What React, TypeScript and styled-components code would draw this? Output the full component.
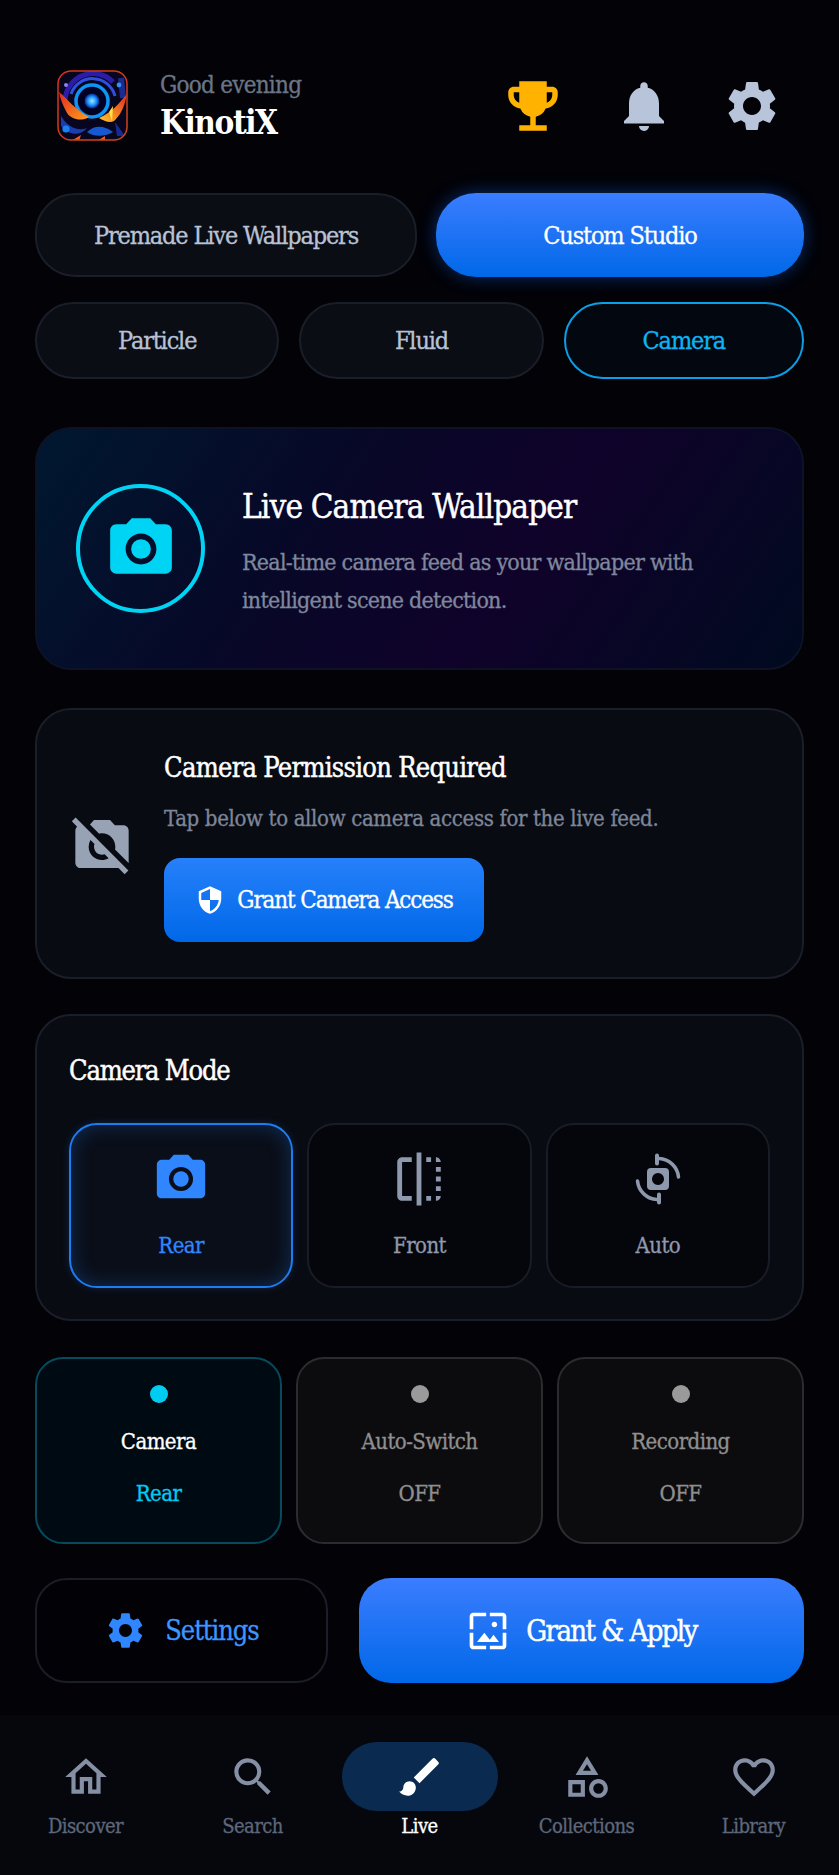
import React from 'react';
import styled, { createGlobalStyle } from 'styled-components';
import {
  MdBrush,
  MdEmojiEvents,
  MdFavoriteBorder,
  MdFlip,
  MdNoPhotography,
  MdNotifications,
  MdOutlineCategory,
  MdOutlineHome,
  MdPhotoCamera,
  MdSearch,
  MdSecurity,
  MdSettings,
  MdWallpaper,
} from 'react-icons/md';

const GlobalStyle = createGlobalStyle`
  html, body {
    margin: 0;
    padding: 0;
    background: #020207;
  }
  * { box-sizing: border-box; }
  body {
    font-family: "DejaVu Serif Condensed", "DejaVu Serif", "Liberation Serif", serif;
    font-stretch: condensed;
    letter-spacing: -0.035em;
    -webkit-text-stroke: 0.3px;
  }
`;

const blueFill = 'linear-gradient(180deg, #3b7dff 0%, #0068e8 100%)';

const Page = styled.div`
  width: 839px;
  height: 1875px;
  overflow: hidden;
  display: flex;
  flex-direction: column;
  background: #020207;
`;

const Main = styled.main`
  flex: 1;
  padding: 70px 35px 0;
  display: flex;
  flex-direction: column;
`;

const Header = styled.header`
  height: 71px;
  display: flex;
  align-items: center;
  padding-left: 22px;
`;

const Brand = styled.div`
  flex: 1;
  display: flex;
  flex-direction: column;
  margin-left: 32px;
`;

const Greeting = styled.div`
  font-size: 24px;
  line-height: 32px;
  letter-spacing: -0.75px;
  color: #6b7585;
`;

const Username = styled.div`
  margin-top: 2px;
  font-size: 33px;
  line-height: 40px;
  font-weight: 700;
  letter-spacing: -1.4px;
  -webkit-text-stroke: 0;
  color: #fff;
`;

const HeaderIcons = styled.div`
  display: flex;
  align-items: center;
  gap: 48px;
  margin-right: 22px;
  font-size: 60px;
  color: #b8c4da;
`;

const TrophyIcon = styled(MdEmojiEvents)`
  font-size: 66px;
  color: #ffb300;
`;

const TabRow = styled.div`
  margin-top: 52px;
  height: 84px;
  display: grid;
  grid-template-columns: 382px 1fr;
  gap: 19px;
`;

const SubTabRow = styled.div`
  margin-top: 25px;
  height: 77px;
  display: grid;
  grid-template-columns: 244fr 244fr 240fr;
  gap: 20px;
`;

const Pill = styled.button<{ $active?: boolean }>`
  font: inherit;
  letter-spacing: -1.15px;
  font-size: 25px;
  border-radius: 40px;
  display: flex;
  align-items: center;
  justify-content: center;
  border: 2px solid ${(p) => (p.$active ? 'transparent' : '#1a1e28')};
  background: ${(p) => (p.$active ? blueFill : '#0a0d14')};
  background-origin: border-box;
  color: ${(p) => (p.$active ? '#fff' : '#b8c2d4')};
  box-shadow: ${(p) => (p.$active ? '0 0 18px rgba(20, 110, 255, 0.4)' : 'none')};
`;

const SubPill = styled(Pill)<{ $selected?: boolean }>`
  border-color: ${(p) => (p.$selected ? '#0a9fe8' : '#1a1e28')};
  background: ${(p) => (p.$selected ? '#03070f' : '#0a0d14')};
  color: ${(p) => (p.$selected ? '#0db4f5' : '#b8c2d4')};
`;

const Hero = styled.section`
  margin-top: 48px;
  height: 243px;
  border-radius: 36px;
  border: 2px solid #0d1226;
  background: linear-gradient(125deg, #001830 0%, #070828 35%, #10022a 62%, #000a20 100%);
  display: flex;
  align-items: center;
  padding: 0 39px;
  gap: 37px;
`;

const HeroBadge = styled.div`
  width: 129px;
  height: 129px;
  flex: none;
  border-radius: 50%;
  border: 4px solid #00d4f5;
  display: flex;
  align-items: center;
  justify-content: center;
  font-size: 74px;
  color: #00d4f5;
`;

const HeroBody = styled.div`
  padding-top: 7px;
`;

const HeroTitle = styled.h1`
  margin: 0 0 15px;
  font-size: 33px;
  line-height: 42px;
  font-weight: 500;
  letter-spacing: -0.85px;
  -webkit-text-stroke: 0.45px;
  color: #fff;
`;

const HeroText = styled.p`
  margin: 0;
  font-size: 23px;
  line-height: 38px;
  letter-spacing: -0.75px;
  color: #7f879c;
`;

const Card = styled.section`
  border-radius: 36px;
  border: 2px solid #1a1e28;
  background: #090b12;
`;

const PermissionCard = styled(Card)`
  margin-top: 38px;
  height: 271px;
  display: flex;
  align-items: center;
  padding: 0 33px;
`;

const PermissionIcon = styled.div`
  width: 94px;
  flex: none;
  font-size: 64px;
  line-height: 0;
  color: #98a2b5;
`;

const PermissionBody = styled.div`
  padding-top: 4px;
`;

const PermissionTitle = styled.h2`
  margin: 0;
  font-size: 27px;
  line-height: 36px;
  font-weight: 500;
  letter-spacing: -0.7px;
  -webkit-text-stroke: 0.45px;
  color: #fff;
`;

const PermissionText = styled.p`
  margin: 15px 0 0;
  font-size: 22px;
  line-height: 36px;
  letter-spacing: -0.35px;
  color: #7d8699;
`;

const GrantButton = styled.button`
  font: inherit;
  letter-spacing: -1.15px;
  margin-top: 21px;
  width: 320px;
  height: 84px;
  border: 0;
  border-radius: 16px;
  background: linear-gradient(180deg, #2680fa 0%, #0068e8 100%);
  color: #fff;
  font-size: 24px;
  display: flex;
  align-items: center;
  justify-content: center;
  gap: 12px;

  svg {
    font-size: 30px;
  }
`;

const ModeCard = styled(Card)`
  margin-top: 35px;
  height: 307px;
  padding: 37px 32px 0;
`;

const SectionTitle = styled.h2`
  margin: 0;
  font-size: 27px;
  line-height: 36px;
  font-weight: 500;
  letter-spacing: -1.2px;
  -webkit-text-stroke: 0.45px;
  color: #fff;
`;

const ModeGrid = styled.div`
  margin-top: 34px;
  display: grid;
  grid-template-columns: repeat(3, 1fr);
  gap: 14px;
`;

const ModeTile = styled.div<{ $active?: boolean }>`
  height: 165px;
  border-radius: 28px;
  border: 2px solid ${(p) => (p.$active ? '#1e7cf0' : '#191c26')};
  background: ${(p) => (p.$active ? '#0a0e18' : '#05060c')};
  box-shadow: ${(p) => (p.$active ? 'inset 0 0 20px rgba(30, 124, 240, 0.3), 0 0 8px rgba(30, 124, 240, 0.2)' : 'none')};
  display: flex;
  flex-direction: column;
  align-items: center;
  padding-top: 25px;
  font-size: 58px;
  color: ${(p) => (p.$active ? '#2f86ff' : '#8f99ad')};

  svg {
    display: block;
  }
`;

const ModeLabel = styled.span`
  margin-top: 23px;
  font-size: 22px;
  line-height: 30px;
`;

const StatusGrid = styled.div`
  margin-top: 36px;
  display: grid;
  grid-template-columns: repeat(3, 1fr);
  gap: 14px;
`;

const StatusTile = styled.div<{ $active?: boolean }>`
  height: 187px;
  border-radius: 28px;
  border: 2px solid ${(p) => (p.$active ? '#064a5c' : '#2b2c30')};
  background: ${(p) => (p.$active ? '#000a12' : '#0c0c0f')};
  display: flex;
  flex-direction: column;
  align-items: center;
  padding-top: 26px;
  color: #8f8f8f;
`;

const StatusDot = styled.span<{ $active?: boolean }>`
  width: 18px;
  height: 18px;
  border-radius: 50%;
  background: ${(p) => (p.$active ? '#00ccf2' : '#9a9a9a')};
`;

const StatusLabel = styled.span<{ $active?: boolean }>`
  margin-top: 24px;
  font-size: 22px;
  line-height: 30px;
  color: ${(p) => (p.$active ? '#fff' : '#8f8f8f')};
`;

const StatusValue = styled.span<{ $active?: boolean }>`
  margin-top: 22px;
  font-size: 22px;
  line-height: 30px;
  color: ${(p) => (p.$active ? '#00ccf2' : '#8f8f8f')};
`;

const ActionRow = styled.div`
  margin-top: 34px;
  height: 105px;
  display: grid;
  grid-template-columns: 293px 1fr;
  gap: 31px;
`;

const SettingsButton = styled.button`
  font: inherit;
  letter-spacing: -1.05px;
  border-radius: 32px;
  border: 2px solid #1b1d27;
  background: #020206;
  color: #3d96ff;
  font-size: 27px;
  display: flex;
  align-items: center;
  justify-content: center;
  gap: 18px;

  svg {
    font-size: 43px;
    color: #2f86ff;
  }
`;

const ApplyButton = styled.button`
  font: inherit;
  letter-spacing: -1.6px;
  -webkit-text-stroke: 0.45px;
  border: 0;
  border-radius: 32px;
  background: ${blueFill};
  color: #fff;
  font-size: 29px;
  display: flex;
  align-items: center;
  justify-content: center;
  gap: 16px;

  svg {
    font-size: 44px;
  }
`;

const BottomNav = styled.nav`
  height: 160px;
  flex: none;
  background: #05070d;
  display: grid;
  grid-template-columns: repeat(5, 1fr);
  padding: 27px 2px 0;
`;

const NavItem = styled.div<{ $active?: boolean }>`
  display: flex;
  flex-direction: column;
  align-items: center;
  color: ${(p) => (p.$active ? '#fff' : '#5d677b')};
`;

const NavIcon = styled.div<{ $active?: boolean }>`
  width: 156px;
  height: 69px;
  border-radius: 35px;
  display: flex;
  align-items: center;
  justify-content: center;
  font-size: 50px;
  background: ${(p) => (p.$active ? '#0a2a50' : 'transparent')};
  color: ${(p) => (p.$active ? '#fff' : '#8690a4')};
`;

const NavLabel = styled.span`
  margin-top: 2px;
  font-size: 20px;
  line-height: 26px;
`;

// App mark: a blue vortex between two flame wings on a dark tile
const AppLogo = () => (
  <svg width="71" height="71" viewBox="0 0 71 71">
    <defs>
      <linearGradient id="logoEdge" x1="0" y1="0" x2="1" y2="1">
        <stop offset="0" stopColor="#d8301c" />
        <stop offset="1" stopColor="#c8481c" />
      </linearGradient>
      <linearGradient id="wingLeft" x1="0" y1="0" x2="1" y2="1">
        <stop offset="0" stopColor="#e0281c" />
        <stop offset="1" stopColor="#ffa020" />
      </linearGradient>
      <linearGradient id="wingRight" x1="1" y1="0" x2="0" y2="1">
        <stop offset="0" stopColor="#e0281c" />
        <stop offset="1" stopColor="#ffc828" />
      </linearGradient>
      <radialGradient id="logoCore">
        <stop offset="0" stopColor="#a0e8ff" />
        <stop offset="0.6" stopColor="#1a90ff" />
        <stop offset="1" stopColor="#0a2080" />
      </radialGradient>
      <clipPath id="logoClip">
        <rect x="1" y="1" width="69" height="69" rx="13" />
      </clipPath>
      <filter id="logoSoft">
        <feGaussianBlur stdDeviation="0.5" />
      </filter>
    </defs>
    <g clipPath="url(#logoClip)">
      <rect width="71" height="71" fill="#08061e" />
      <g filter="url(#logoSoft)">
        <path d="M8 30 A28 28 0 0 1 56 12" fill="none" stroke="#2a1ea8" strokeWidth="5" />
        <path d="M14 24 A23 23 0 0 1 58 26" fill="none" stroke="#2f50e0" strokeWidth="3" />
        <path d="M64 8 L66 28" stroke="#1a2c90" strokeWidth="6" />
        <circle cx="35" cy="31" r="16" fill="#040620" stroke="#1094f4" strokeWidth="3.5" />
        <circle cx="35" cy="31" r="7.5" fill="url(#logoCore)" />
        <circle cx="9" cy="15" r="2" fill="#9080f0" />
        <circle cx="62" cy="15" r="2.4" fill="#3090f0" />
        <path d="M2 22 C10 28 18 40 32 47 C24 52 14 49 10 43 C6 36 3 28 2 22 Z" fill="url(#wingLeft)" />
        <path d="M70 24 C63 32 56 42 42 48 C48 52 56 54 59 49 C65 43 68 34 70 24 Z" fill="url(#wingRight)" />
        <path d="M52 42 L56 36 L55 52 Z" fill="#ffe040" />
        <path d="M4 46 C10 56 20 62 30 58 C24 66 12 66 4 56 Z" fill="#1a3cb0" />
        <circle cx="9" cy="59" r="3.6" fill="#1a80f0" />
        <path d="M30 62 C38 54 48 56 56 62 C50 66 38 68 30 62 Z" fill="#1858d0" />
        <path d="M58 52 L68 66 L60 66 Z" fill="#182c90" />
        <path d="M14 71 L24 65 L22 71 Z M40 71 L48 66 L48 71 Z" fill="#f05a1c" />
      </g>
    </g>
    <rect x="1" y="1" width="69" height="69" rx="13" fill="none" stroke="url(#logoEdge)" strokeWidth="1.5" />
  </svg>
);

// Camera body with two orbit arrows, for the automatic mode
const AutoSwitchIcon = () => (
  <svg width="58" height="58" viewBox="-5 -5 58 58" fill="none" stroke="currentColor">
    <path fillRule="evenodd" stroke="none" fill="currentColor" d="M17 13 h14 a4 4 0 0 1 4 4 v14 a4 4 0 0 1 -4 4 h-14 a4 4 0 0 1 -4 -4 v-14 a4 4 0 0 1 4 -4 Z M24 18 a6 6 0 1 0 0.01 0 Z" />
    <path d="M25 3.5 A20.5 20.5 0 0 1 44.5 22" strokeWidth="3.5" strokeLinecap="round" />
    <path d="M3.5 26 A20.5 20.5 0 0 0 23 44.5" strokeWidth="3.5" strokeLinecap="round" />
    <path d="M23 0.5 v8 M25 39.5 v8" strokeWidth="4" strokeLinecap="round" />
  </svg>
);

const navItems = [
  { label: 'Discover', icon: <MdOutlineHome /> },
  { label: 'Search', icon: <MdSearch /> },
  { label: 'Live', icon: <MdBrush />, active: true },
  { label: 'Collections', icon: <MdOutlineCategory /> },
  { label: 'Library', icon: <MdFavoriteBorder /> },
];

const modes = [
  { label: 'Rear', icon: <MdPhotoCamera />, active: true },
  { label: 'Front', icon: <MdFlip /> },
  { label: 'Auto', icon: <AutoSwitchIcon /> },
];

const statuses = [
  { label: 'Camera', value: 'Rear', active: true },
  { label: 'Auto-Switch', value: 'OFF' },
  { label: 'Recording', value: 'OFF' },
];

const App = () => (
  <Page>
    <GlobalStyle />
    <Main>
      <Header>
        <AppLogo />
        <Brand>
          <Greeting>Good evening</Greeting>
          <Username>KinotiX</Username>
        </Brand>
        <HeaderIcons>
          <TrophyIcon />
          <MdNotifications />
          <MdSettings />
        </HeaderIcons>
      </Header>

      <TabRow>
        <Pill>Premade Live Wallpapers</Pill>
        <Pill $active>Custom Studio</Pill>
      </TabRow>
      <SubTabRow>
        <SubPill>Particle</SubPill>
        <SubPill>Fluid</SubPill>
        <SubPill $selected>Camera</SubPill>
      </SubTabRow>

      <Hero>
        <HeroBadge>
          <MdPhotoCamera />
        </HeroBadge>
        <HeroBody>
          <HeroTitle>Live Camera Wallpaper</HeroTitle>
          <HeroText>
            Real-time camera feed as your wallpaper with
            <br />
            intelligent scene detection.
          </HeroText>
        </HeroBody>
      </Hero>

      <PermissionCard>
        <PermissionIcon>
          <MdNoPhotography />
        </PermissionIcon>
        <PermissionBody>
          <PermissionTitle>Camera Permission Required</PermissionTitle>
          <PermissionText>Tap below to allow camera access for the live feed.</PermissionText>
          <GrantButton>
            <MdSecurity />
            Grant Camera Access
          </GrantButton>
        </PermissionBody>
      </PermissionCard>

      <ModeCard>
        <SectionTitle>Camera Mode</SectionTitle>
        <ModeGrid>
          {modes.map((mode) => (
            <ModeTile key={mode.label} $active={mode.active}>
              {mode.icon}
              <ModeLabel>{mode.label}</ModeLabel>
            </ModeTile>
          ))}
        </ModeGrid>
      </ModeCard>

      <StatusGrid>
        {statuses.map((status) => (
          <StatusTile key={status.label} $active={status.active}>
            <StatusDot $active={status.active} />
            <StatusLabel $active={status.active}>{status.label}</StatusLabel>
            <StatusValue $active={status.active}>{status.value}</StatusValue>
          </StatusTile>
        ))}
      </StatusGrid>

      <ActionRow>
        <SettingsButton>
          <MdSettings />
          Settings
        </SettingsButton>
        <ApplyButton>
          <MdWallpaper />
          Grant &amp; Apply
        </ApplyButton>
      </ActionRow>
    </Main>

    <BottomNav>
      {navItems.map((item) => (
        <NavItem key={item.label} $active={item.active}>
          <NavIcon $active={item.active}>{item.icon}</NavIcon>
          <NavLabel>{item.label}</NavLabel>
        </NavItem>
      ))}
    </BottomNav>
  </Page>
);

export default App;
